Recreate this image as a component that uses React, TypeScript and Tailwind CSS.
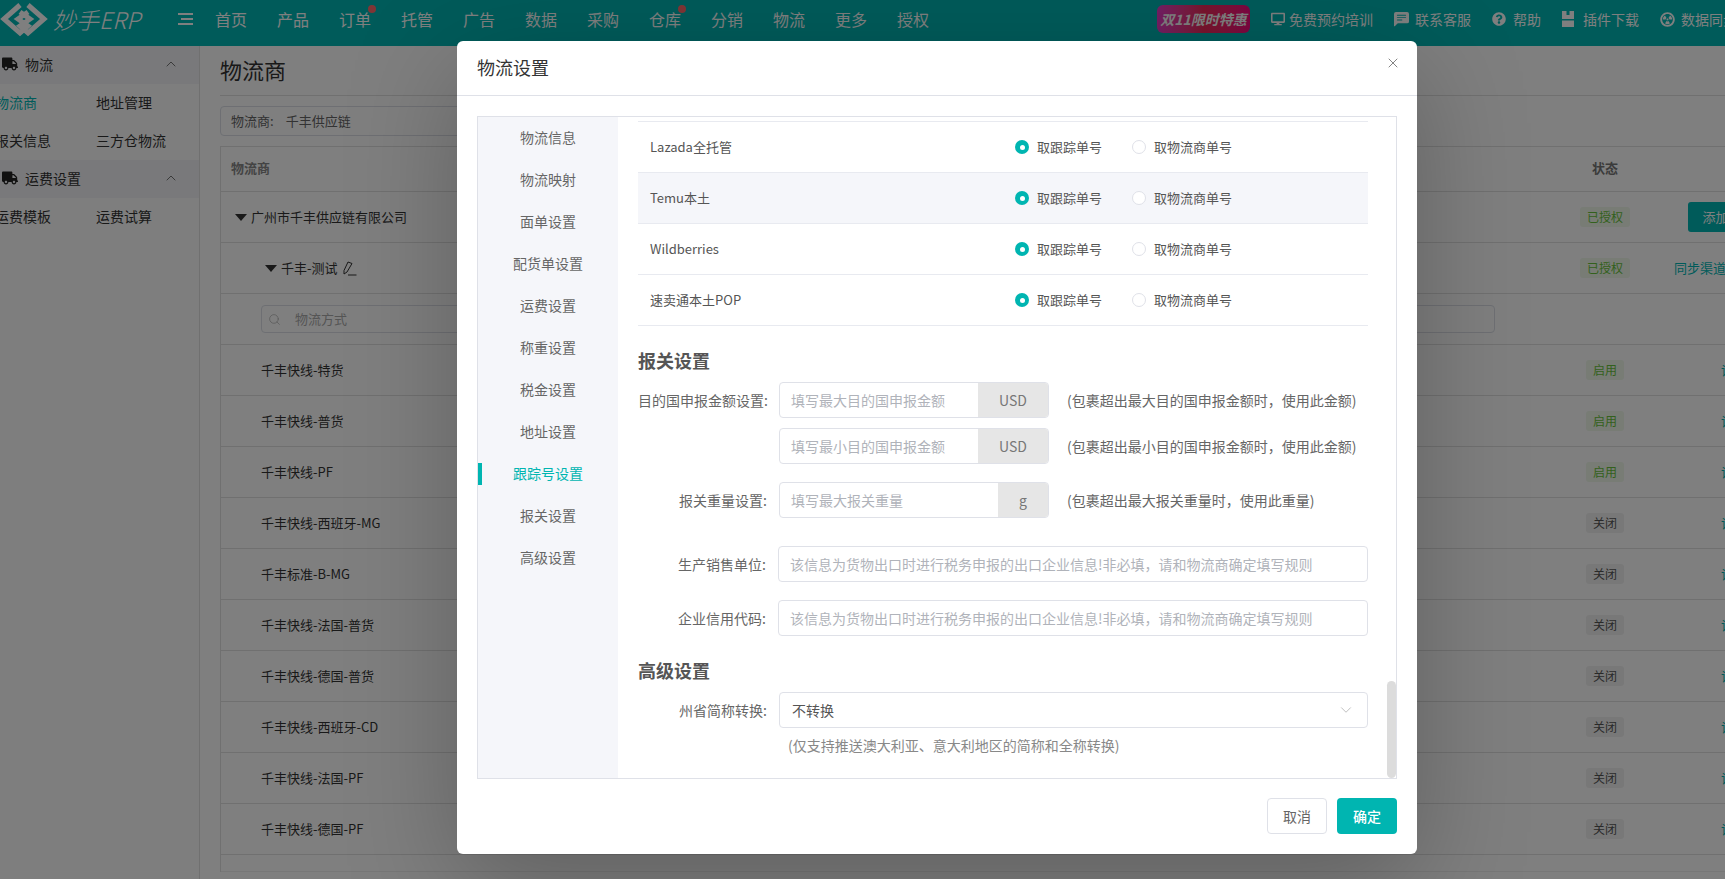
import { ChevronDown, ChevronUp, Search, X } from "lucide-react";
import { FaDesktop, FaQuestionCircle, FaRadiationAlt, FaTruck } from "react-icons/fa";
import { BsChatLeftTextFill } from "react-icons/bs";

const navItems = [
  { label: "首页" },
  { label: "产品" },
  { label: "订单", dot: true },
  { label: "托管" },
  { label: "广告" },
  { label: "数据" },
  { label: "采购" },
  { label: "仓库", dot: true },
  { label: "分销" },
  { label: "物流" },
  { label: "更多" },
  { label: "授权" },
];

const channels = [
  { name: "千丰快线-特货", on: true },
  { name: "千丰快线-普货", on: true },
  { name: "千丰快线-PF", on: true },
  { name: "千丰快线-西班牙-MG", on: false },
  { name: "千丰标准-B-MG", on: false },
  { name: "千丰快线-法国-普货", on: false },
  { name: "千丰快线-德国-普货", on: false },
  { name: "千丰快线-西班牙-CD", on: false },
  { name: "千丰快线-法国-PF", on: false },
  { name: "千丰快线-德国-PF", on: false },
];

const settingsTabs = [
  "物流信息",
  "物流映射",
  "面单设置",
  "配货单设置",
  "运费设置",
  "称重设置",
  "税金设置",
  "地址设置",
  "跟踪号设置",
  "报关设置",
  "高级设置",
];

const platforms = [
  { name: "Lazada全托管" },
  { name: "Temu本土", active: true },
  { name: "Wildberries" },
  { name: "速卖通本土POP" },
];

const Logo = () => (
  <svg className="shrink-0" width="48" height="36" viewBox="0 0 48 36" fill="none" stroke="#fff" strokeWidth="5">
    <path d="M20 4 L4 18 L20 32 L28 25 L18 18 L28 11" />
    <path d="M28 4 L44 18 L28 32 L20 25 L30 18 L20 11" />
  </svg>
);

const PluginIcon = () => (
  <svg className="shrink-0" width="12" height="16" viewBox="0 0 12 16" fill="#fff">
    <path d="M0 0h4.5v4h3V0H12v8H0z" />
    <path d="M0 9.5h12V16H0z" />
  </svg>
);

const StatusBadge = ({ label, kind }: { label: string; kind: "green" | "gray" }) => (
  <span
    className={
      kind === "green"
        ? "h-[20px] px-[7px] rounded-[3px] bg-[#f0f9eb] text-[#67c23a] text-[12px] leading-[19px]"
        : "h-[20px] px-[7px] rounded-[3px] bg-[#f1f1f1] text-[#555] text-[12px] leading-[19px]"
    }
  >
    {label}
  </span>
);

const TableRow = ({
  left,
  status,
  action,
  header,
}: {
  left: React.ReactNode;
  status?: React.ReactNode;
  action?: React.ReactNode;
  header?: boolean;
}) => (
  <div
    className={
      header
        ? "flex items-center h-[45px] pb-[2px] border-b border-[#e0e0e0] text-[13px] text-[#333]"
        : "flex items-center h-[51px] border-b border-[#e0e0e0] text-[13px] text-[#333]"
    }
  >
    <div className="flex-1 min-w-0">{left}</div>
    <div className="w-[100px] flex justify-center">{status}</div>
    <div className="w-[160px]">{action}</div>
  </div>
);

const Page = () => (
  <div className="flex flex-col w-[1725px] h-[879px] overflow-hidden bg-white">
    <div className="flex items-center h-[46px] shrink-0 pb-[8px] bg-[#00b7b5] text-white">
      <Logo />
      <span className="ml-[5px] w-[125px] shrink-0 italic text-[23px] leading-none font-light">妙手ERP</span>
      <div className="flex flex-col gap-[3px] w-[15px] shrink-0 mr-[22px]">
        <div className="h-[2px] bg-white" />
        <div className="h-[2px] bg-white ml-[3px]" />
        <div className="h-[2px] bg-white" />
      </div>
      <div className="flex shrink-0">
        {navItems.map((n) => (
          <div key={n.label} className="relative w-[62px] text-[16px] leading-[38px] h-[38px]">
            {n.label}
            {n.dot && (
              <span className="absolute left-[29px] top-[5px] w-[8px] h-[8px] rounded-full bg-[#ff6b6b]" />
            )}
          </div>
        ))}
      </div>
      <div className="ml-[198px] shrink-0 flex items-center justify-center w-[93px] h-[28px] rounded-[6px] bg-gradient-to-r from-[#e63cc8] via-[#f02a5a] to-[#fa0a82] italic font-bold text-[14px] whitespace-nowrap">
        双11限时特惠
      </div>
      <div className="flex items-center shrink-0 ml-[21px] gap-[21px] text-[14px] whitespace-nowrap">
        <div className="flex items-center gap-[4px]">
          <FaDesktop size={14} />
          <span>免费预约培训</span>
        </div>
        <div className="flex items-center gap-[6px]">
          <BsChatLeftTextFill size={15} />
          <span>联系客服</span>
        </div>
        <div className="flex items-center gap-[7px]">
          <FaQuestionCircle size={14} />
          <span>帮助</span>
        </div>
        <div className="flex items-center gap-[9px]">
          <PluginIcon />
          <span>插件下载</span>
        </div>
        <div className="flex items-center gap-[6px]">
          <FaRadiationAlt size={15} />
          <span>数据同步</span>
        </div>
      </div>
    </div>

    <div className="flex flex-1 min-h-0">
      <aside className="w-[200px] shrink-0 border-r border-[#e0e0e0] bg-[#fdfdfd] text-[14px] text-[#333]">
        <div className="flex items-center h-[38px] pb-[2px] bg-[#f2f3f6] pl-[2px] pr-[20px]">
          <FaTruck size={16} className="text-[#222]" />
          <span className="ml-[7px] flex-1">物流</span>
          <ChevronUp size={16} strokeWidth={1} />
        </div>
        <div className="grid grid-cols-[101px_1fr] -ml-[5px] w-[205px]">
          <span className="leading-[36px] h-[38px] text-[#00b7b5]">物流商</span>
          <span className="leading-[36px] h-[38px]">地址管理</span>
          <span className="leading-[36px] h-[38px]">报关信息</span>
          <span className="leading-[36px] h-[38px]">三方仓物流</span>
        </div>
        <div className="flex items-center h-[38px] pb-[2px] bg-[#f2f3f6] pl-[2px] pr-[20px]">
          <FaTruck size={16} className="text-[#222]" />
          <span className="ml-[7px] flex-1">运费设置</span>
          <ChevronUp size={16} strokeWidth={1} />
        </div>
        <div className="grid grid-cols-[101px_1fr] -ml-[5px] w-[205px]">
          <span className="leading-[36px] h-[38px]">运费模板</span>
          <span className="leading-[36px] h-[38px]">运费试算</span>
        </div>
      </aside>

      <main className="pl-[20px] w-[1615px] shrink-0">
        <div className="h-[50px] border-b border-[#e0e0e0] text-[22px] leading-[46px] text-[#333]">物流商</div>
        <div className="flex items-center mt-[10px] w-[1000px] h-[30px] border border-[#dcdfe6] rounded-[4px] pl-[10px] text-[13px] text-[#666]">
          <span>物流商:</span>
          <span className="ml-[12px]">千丰供应链</span>
        </div>
        <div className="mt-[10px] border-l border-t border-[#e0e0e0]">
          <TableRow
            header
            left={<span className="pl-[10px] font-bold text-[#888]">物流商</span>}
            status={<span className="font-bold text-[#777]">状态</span>}
          />
          <TableRow
            left={
              <div className="flex items-center pl-[14px]">
                <span className="w-0 h-0 border-x-[6px] border-x-transparent border-t-[7px] border-t-[#333]" />
                <span className="ml-[4px]">广州市千丰供应链有限公司</span>
              </div>
            }
            status={<StatusBadge label="已授权" kind="green" />}
            action={
              <button className="ml-[33px] w-[94px] h-[30px] rounded-[3px] bg-[#00b7b5] text-white text-[13px]">
                添加物流商
              </button>
            }
          />
          <TableRow
            left={
              <div className="flex items-center pl-[44px]">
                <span className="w-0 h-0 border-x-[6px] border-x-transparent border-t-[7px] border-t-[#333]" />
                <span className="ml-[4px]">千丰-测试</span>
                <svg className="ml-[4px]" width="15" height="15" viewBox="0 0 15 15" fill="none" stroke="#333">
                  <path d="M6 1 L10 2.5 L5 11 L2 13 L2 9.5 Z" />
                  <path d="M6 14 H14.5" />
                </svg>
              </div>
            }
            status={<StatusBadge label="已授权" kind="green" />}
            action={<span className="pl-[19px] text-[#00b7b5] whitespace-nowrap">同步渠道</span>}
          />
          <div className="flex items-center h-[51px] border-b border-[#e0e0e0] pl-[40px]">
            <div className="flex items-center w-[1234px] h-[28px] border border-[#dcdfe6] rounded-[4px] pl-[6px] text-[13px] text-[#aaa]">
              <Search size={13} strokeWidth={1.25} />
              <span className="ml-[14px]">物流方式</span>
            </div>
          </div>
          {channels.map((c) => (
            <TableRow
              key={c.name}
              left={<span className="pl-[40px]">{c.name}</span>}
              status={<StatusBadge label={c.on ? "启用" : "关闭"} kind={c.on ? "green" : "gray"} />}
              action={<span className="pl-[66px] text-[#00b7b5]">设置</span>}
            />
          ))}
          <div className="h-[17px] border-b border-[#eeeeee]" />
        </div>
      </main>
    </div>
  </div>
);

const Radio = ({ checked, label }: { checked?: boolean; label: string }) => (
  <div className="flex items-center gap-[8px] text-[13px] text-[#555]">
    {checked ? (
      <span className="flex items-center justify-center w-[14px] h-[14px] rounded-full bg-[#00b5b1]">
        <span className="w-[5px] h-[5px] rounded-full bg-white" />
      </span>
    ) : (
      <span className="w-[14px] h-[14px] rounded-full border border-[#dfe1e8] bg-white" />
    )}
    <span>{label}</span>
  </div>
);

const AddonInput = ({ placeholder, unit, wide }: { placeholder: string; unit: string; wide?: boolean }) => (
  <div className="flex w-[270px] h-[36px] border border-[#dfe1e8] rounded-[4px] text-[14px] overflow-hidden">
    <div className="flex-1 flex items-center pl-[11px] text-[#b0b3ba]">{placeholder}</div>
    <div
      className={
        wide
          ? "w-[70px] flex items-center justify-center bg-[#e6e6e6] text-[#777]"
          : "w-[50px] flex items-center justify-center bg-[#e6e6e6] text-[#777]"
      }
    >
      {unit}
    </div>
  </div>
);

const FieldLabel = ({ children, wide }: { children?: React.ReactNode; wide?: boolean }) => (
  <div
    className={
      wide
        ? "w-[129px] shrink-0 mr-[12px] text-right text-[14px] text-[#666] whitespace-nowrap"
        : "w-[128px] shrink-0 mr-[12px] text-right text-[14px] text-[#666] whitespace-nowrap"
    }
  >
    {children}
  </div>
);

const Modal = () => (
  <div className="absolute left-[457px] top-[41px] w-[960px] h-[813px] flex flex-col rounded-[6px] bg-white shadow-[0_30px_110px_rgba(0,0,0,0.25)]">
    <div className="relative flex items-center h-[55px] shrink-0 border-b border-[#dfe1e8] pb-[2px] pl-[20px] text-[18px] text-[#333]">
      物流设置
      <X size={16} strokeWidth={1} className="absolute right-[16px] top-[14px] text-[#444]" />
    </div>
    <div className="mx-[20px] mt-[20px] h-[663px] flex border border-[#dfe1e8] relative">
      <div className="w-[140px] shrink-0 bg-[#f5f6fa] text-[14px] text-[#666]">
        {settingsTabs.map((t) => (
          <div
            key={t}
            className={
              t === "跟踪号设置"
                ? "relative flex items-center justify-center h-[42px] pb-[2px] text-[#00b5b1]"
                : "flex items-center justify-center h-[42px] pb-[2px]"
            }
          >
            {t === "跟踪号设置" && <span className="absolute left-0 top-[10px] w-[4px] h-[22px] bg-[#00b5b1]" />}
            {t}
          </div>
        ))}
      </div>
      <div className="w-[750px] pl-[20px] pt-[4px]">
        <div className="border-b border-[#e8eaf0]">
          {platforms.map((p) => (
            <div
              key={p.name}
              className={
                p.active
                  ? "flex items-center h-[51px] border-t border-[#e8eaf0] bg-[#f5f6fa] pl-[12px] text-[13px] text-[#555]"
                  : "flex items-center h-[51px] border-t border-[#e8eaf0] pl-[12px] text-[13px] text-[#555]"
              }
            >
              <div className="w-[365px]">{p.name}</div>
              <div className="w-[117px]">
                <Radio checked label="取跟踪单号" />
              </div>
              <Radio label="取物流商单号" />
            </div>
          ))}
        </div>

        <div className="mt-[22px] h-[24px] leading-[24px] text-[18px] font-bold text-[#555]">报关设置</div>
        <div className="mt-[10px] flex items-center h-[36px]">
          <FieldLabel wide>目的国申报金额设置:</FieldLabel>
          <AddonInput placeholder="填写最大目的国申报金额" unit="USD" wide />
          <span className="ml-[18px] text-[14px] text-[#666]">(包裹超出最大目的国申报金额时，使用此金额)</span>
        </div>
        <div className="mt-[10px] flex items-center h-[36px]">
          <FieldLabel wide />
          <AddonInput placeholder="填写最小目的国申报金额" unit="USD" wide />
          <span className="ml-[18px] text-[14px] text-[#666]">(包裹超出最小目的国申报金额时，使用此金额)</span>
        </div>
        <div className="mt-[18px] flex items-center h-[36px]">
          <FieldLabel wide>报关重量设置:</FieldLabel>
          <AddonInput placeholder="填写最大报关重量" unit="g" />
          <span className="ml-[18px] text-[14px] text-[#666]">(包裹超出最大报关重量时，使用此重量)</span>
        </div>
        <div className="mt-[28px] flex items-center h-[36px]">
          <FieldLabel>生产销售单位:</FieldLabel>
          <div className="flex items-center w-[590px] h-[36px] border border-[#dfe1e8] rounded-[4px] pl-[11px] text-[14px] text-[#b0b3ba]">
            该信息为货物出口时进行税务申报的出口企业信息!非必填，请和物流商确定填写规则
          </div>
        </div>
        <div className="mt-[18px] flex items-center h-[36px]">
          <FieldLabel>企业信用代码:</FieldLabel>
          <div className="flex items-center w-[590px] h-[36px] border border-[#dfe1e8] rounded-[4px] pl-[11px] text-[14px] text-[#b0b3ba]">
            该信息为货物出口时进行税务申报的出口企业信息!非必填，请和物流商确定填写规则
          </div>
        </div>

        <div className="mt-[22px] h-[24px] leading-[24px] text-[18px] font-bold text-[#555]">高级设置</div>
        <div className="mt-[10px] flex items-center h-[36px]">
          <FieldLabel wide>州省简称转换:</FieldLabel>
          <div className="flex items-center justify-between w-[589px] h-[36px] border border-[#dfe1e8] rounded-[4px] pl-[12px] pr-[12px] text-[14px] text-[#555]">
            不转换
            <ChevronDown size={18} strokeWidth={1} className="text-[#aaa]" />
          </div>
        </div>
        <div className="mt-[7px] ml-[150px] text-[14px] leading-[20px] text-[#888]">
          (仅支持推送澳大利亚、意大利地区的简称和全称转换)
        </div>
      </div>
      <div className="absolute right-0 bottom-0 w-[9px] h-[97px] rounded-full bg-[#dcdcdc]" />
    </div>
    <div className="flex justify-end gap-[10px] mt-[19px] pr-[20px]">
      <button className="w-[60px] h-[36px] rounded-[4px] border border-[#dfe1e8] bg-white text-[14px] text-[#666]">
        取消
      </button>
      <button className="w-[60px] h-[36px] rounded-[4px] bg-[#00b5b1] text-white text-[14px] font-medium">确定</button>
    </div>
  </div>
);

export default function App() {
  return (
    <div className="relative w-[1725px] h-[879px] overflow-hidden font-['Noto_Sans_CJK_SC',sans-serif]">
      <Page />
      <div className="absolute inset-0 bg-black/50" />
      <Modal />
    </div>
  );
}
